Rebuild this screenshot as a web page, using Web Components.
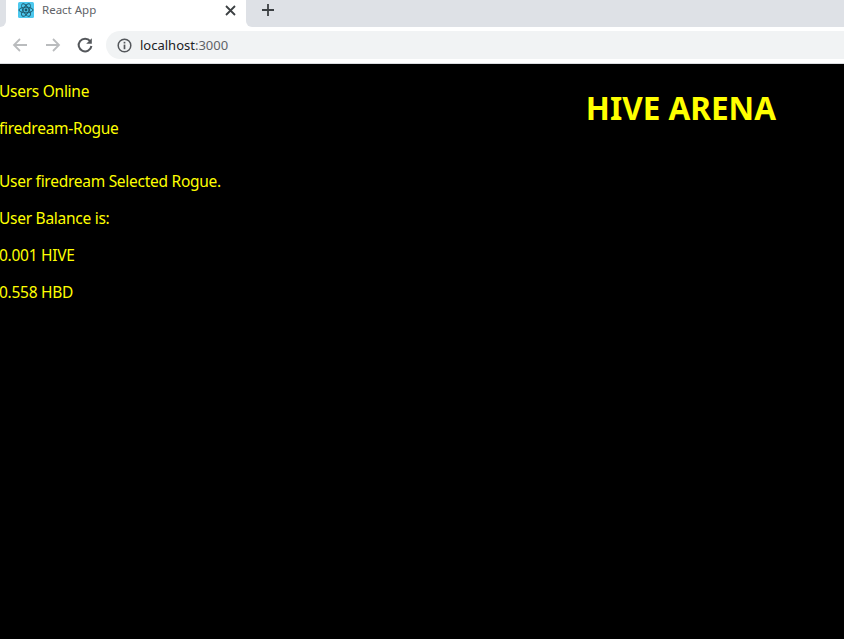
<!DOCTYPE html>
<html>
<head>
<meta charset="utf-8">
<title>React App</title>
<style>
  html, body { margin: 0; height: 100%; background: #000; overflow: hidden; }
  body { display: flex; flex-direction: column; }
</style>
</head>
<body>
<browser-chrome tab-title="React App" url="localhost" port=":3000"></browser-chrome>
<arena-page>
  <info-line>Users Online</info-line>
  <info-line>firedream-Rogue</info-line>
  <info-line gap>User firedream Selected Rogue.</info-line>
  <info-line>User Balance is:</info-line>
  <info-line>0.001 HIVE</info-line>
  <info-line>0.558 HBD</info-line>
</arena-page>

<script>
class BrowserChrome extends HTMLElement {
    connectedCallback() {
        this.attachShadow({ mode: 'open' });
        this.shadowRoot.innerHTML = `
            <style>
                :host {
                    display: block;
                    flex: none;
                    font-family: 'Noto Sans', 'Open Sans', sans-serif;
                    background: #fff;
                    border-bottom: 1px solid #dadce0;
                }
                .strip {
                    height: 27px;
                    display: flex;
                    align-items: stretch;
                }
                .edge {
                    width: 6px;
                    background: #dee1e6;
                    border-bottom-right-radius: 6px;
                }
                .tab {
                    width: 240px;
                    display: flex;
                    align-items: center;
                    padding: 0 9px 8px 12px;
                    box-sizing: border-box;
                    gap: 8px;
                }
                .rest {
                    flex: 1;
                    background: #dee1e6;
                    border-bottom-left-radius: 6px;
                }
                .title {
                    flex: 1;
                    font-size: 11.5px;
                    color: #5f6368;
                    padding-bottom: 1px;
                }
                .close { width: 13px; height: 13px; display: block; margin-top: 2px; }
                .favicon { display: block; width: 16px; height: 16px; }
                .plus { width: 14px; height: 14px; display: block; margin: 3px 0 0 15px; }
                .toolbar {
                    height: 36px;
                    display: flex;
                    align-items: center;
                    padding-left: 11px;
                    box-sizing: border-box;
                }
                .btn { display: block; width: 18px; height: 18px; flex: none; }
                .fwd { margin-left: 15px; }
                .reload { margin-left: 14px; }
                .omnibox {
                    flex: 1;
                    height: 28px;
                    margin-left: 12px;
                    background: #f1f3f4;
                    border-radius: 14px 0 0 14px;
                    display: flex;
                    align-items: center;
                    padding-left: 11px;
                    font-size: 13px;
                    color: #202124;
                }
                .info { width: 15px; height: 15px; display: block; margin-right: 8px; }
                .port { color: #5f6368; }
            </style>
            <div class="strip">
                <div class="edge"></div>
                <div class="tab">
                    <svg class="favicon" viewBox="0 0 16 16">
                        <rect width="16" height="16" rx="1.5" fill="#4cc8ee"/>
                        <g fill="none" stroke="#1d5567" stroke-width="0.9">
                            <ellipse cx="8" cy="8" rx="7" ry="2.8"/>
                            <ellipse cx="8" cy="8" rx="7" ry="2.8" transform="rotate(60 8 8)"/>
                            <ellipse cx="8" cy="8" rx="7" ry="2.8" transform="rotate(120 8 8)"/>
                        </g>
                        <circle cx="8" cy="8" r="1.4" fill="#1d5567"/>
                    </svg>
                    <span class="title">${this.getAttribute('tab-title')}</span>
                    <svg class="close" viewBox="0 0 13 13"><path d="M2 2l9 9M11 2l-9 9" stroke="#3c4043" stroke-width="1.8" fill="none"/></svg>
                </div>
                <div class="rest">
                    <svg class="plus" viewBox="0 0 14 14"><path d="M7 1v12M1 7h12" stroke="#3c4043" stroke-width="1.8" fill="none"/></svg>
                </div>
            </div>
            <div class="toolbar">
                <svg class="btn" viewBox="0 0 18 18"><path d="M16 9H3M9 3L3 9l6 6" stroke="#babcbe" stroke-width="1.8" fill="none"/></svg>
                <svg class="btn fwd" viewBox="0 0 18 18"><path d="M2 9h13M9 3l6 6-6 6" stroke="#babcbe" stroke-width="1.8" fill="none"/></svg>
                <svg class="btn reload" viewBox="0 0 18 18"><path d="M14.2 5.2A6.4 6.4 0 1 0 15.4 10" stroke="#54575b" stroke-width="2" fill="none"/><path d="M15.8 2.2v5.6h-5.6z" fill="#54575b"/></svg>
                <div class="omnibox">
                    <svg class="info" viewBox="0 0 15 15"><circle cx="7.5" cy="7.5" r="6.3" fill="none" stroke="#54575b" stroke-width="1.5"/><path d="M7.5 6.6v4.6" stroke="#54575b" stroke-width="1.7"/><path d="M7.5 3.8v1.7" stroke="#54575b" stroke-width="1.7"/></svg>
                    <span>${this.getAttribute('url')}</span><span class="port">${this.getAttribute('port')}</span>
                </div>
            </div>
        `;
    }
}
customElements.define('browser-chrome', BrowserChrome);

class ArenaPage extends HTMLElement {
    connectedCallback() {
        this.attachShadow({ mode: 'open' });
        this.shadowRoot.innerHTML = `
            <style>
                :host {
                    display: flex;
                    flex: 1;
                    justify-content: space-between;
                    align-items: flex-start;
                    background: #000;
                    color: #ffff00;
                    font-family: 'Noto Sans', 'Open Sans', sans-serif;
                    padding-right: 68px;
                }
                .col { padding-top: 17px; margin-left: -1px; }
                h1 {
                    margin: 22px 0 0;
                    font-size: 31.5px;
                    line-height: 44px;
                    font-weight: 700;
                }
            </style>
            <div class="col"><slot></slot></div>
            <h1>HIVE ARENA</h1>
        `;
    }
}
customElements.define('arena-page', ArenaPage);

class InfoLine extends HTMLElement {
    connectedCallback() {
        this.attachShadow({ mode: 'open' });
        this.shadowRoot.innerHTML = `
            <style>
                :host {
                    display: block;
                    font-size: 15.5px;
                    letter-spacing: -0.27px;
                    line-height: 21px;
                    margin-bottom: 16px;
                }
                :host([gap]) { margin-top: 32px; }
            </style>
            <slot></slot>
        `;
    }
}
customElements.define('info-line', InfoLine);
</script>
</body>
</html>
